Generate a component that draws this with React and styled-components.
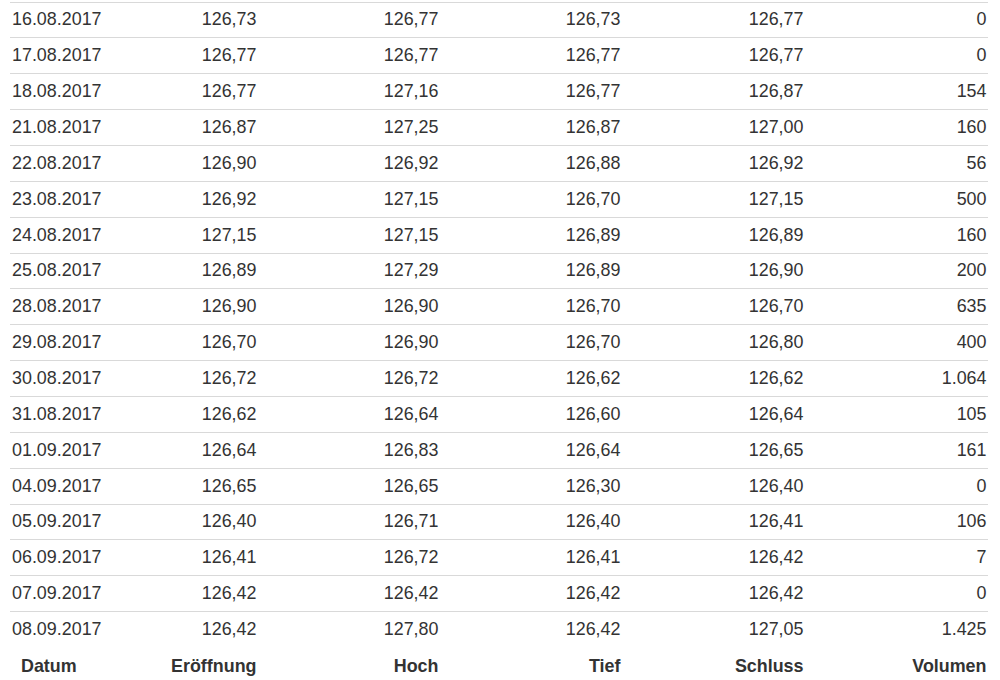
import styled, { createGlobalStyle } from 'styled-components';

const GlobalStyle = createGlobalStyle`
  body {
    margin: 0;
    background: #fff;
    font-family: "Liberation Sans", Arial, sans-serif;
    color: #333;
  }
`;

const rows = [
  ['16.08.2017', '126,73', '126,77', '126,73', '126,77', '0'],
  ['17.08.2017', '126,77', '126,77', '126,77', '126,77', '0'],
  ['18.08.2017', '126,77', '127,16', '126,77', '126,87', '154'],
  ['21.08.2017', '126,87', '127,25', '126,87', '127,00', '160'],
  ['22.08.2017', '126,90', '126,92', '126,88', '126,92', '56'],
  ['23.08.2017', '126,92', '127,15', '126,70', '127,15', '500'],
  ['24.08.2017', '127,15', '127,15', '126,89', '126,89', '160'],
  ['25.08.2017', '126,89', '127,29', '126,89', '126,90', '200'],
  ['28.08.2017', '126,90', '126,90', '126,70', '126,70', '635'],
  ['29.08.2017', '126,70', '126,90', '126,70', '126,80', '400'],
  ['30.08.2017', '126,72', '126,72', '126,62', '126,62', '1.064'],
  ['31.08.2017', '126,62', '126,64', '126,60', '126,64', '105'],
  ['01.09.2017', '126,64', '126,83', '126,64', '126,65', '161'],
  ['04.09.2017', '126,65', '126,65', '126,30', '126,40', '0'],
  ['05.09.2017', '126,40', '126,71', '126,40', '126,41', '106'],
  ['06.09.2017', '126,41', '126,72', '126,41', '126,42', '7'],
  ['07.09.2017', '126,42', '126,42', '126,42', '126,42', '0'],
  ['08.09.2017', '126,42', '127,80', '126,42', '127,05', '1.425'],
];

const headers = ['Datum', 'Eröffnung', 'Hoch', 'Tief', 'Schluss', 'Volumen'];

export default function App() {
  return (
    <>
      <GlobalStyle />
      <Table>
        {rows.map((r) => (
          <Row key={r[0]}>
            {r.map((v, i) => (
              <Cell key={i} $first={i === 0}>{v}</Cell>
            ))}
          </Row>
        ))}
        <HeadRow>
          {headers.map((h, i) => (
            <HeadCell key={h} $first={i === 0}>{h}</HeadCell>
          ))}
        </HeadRow>
      </Table>
    </>
  );
}

const Table = styled.div`
  width: 978px;
  margin-left: 10px;
  padding-top: 1.5px;
  font-size: 17.9px;
`;

const Row = styled.div`
  display: grid;
  grid-template-columns: 90px 158px 182px 182px 183px 183px;
  align-items: center;
  height: 35.87px;
  box-sizing: border-box;
  border-top: 1.2px solid #d9d9d9;

  &:last-of-type {
    border-bottom: 1.2px solid #d9d9d9;
  }
`;

const Cell = styled.div`
  text-align: ${(p) => (p.$first ? 'left' : 'right')};
  padding: ${(p) => (p.$first ? '0 0 0 2px' : '0 1.5px 0 0')};
  color: #333;
  white-space: nowrap;
`;

const HeadRow = styled.div`
  display: grid;
  grid-template-columns: 90px 158px 182px 182px 183px 183px;
  align-items: center;
  height: 34px;
  padding-top: 3px;
`;

const HeadCell = styled.div`
  text-align: ${(p) => (p.$first ? 'left' : 'right')};
  padding: ${(p) => (p.$first ? '0 0 0 11px' : '0 1.5px 0 0')};
  font-weight: bold;
  color: #333;
  white-space: nowrap;
`;
